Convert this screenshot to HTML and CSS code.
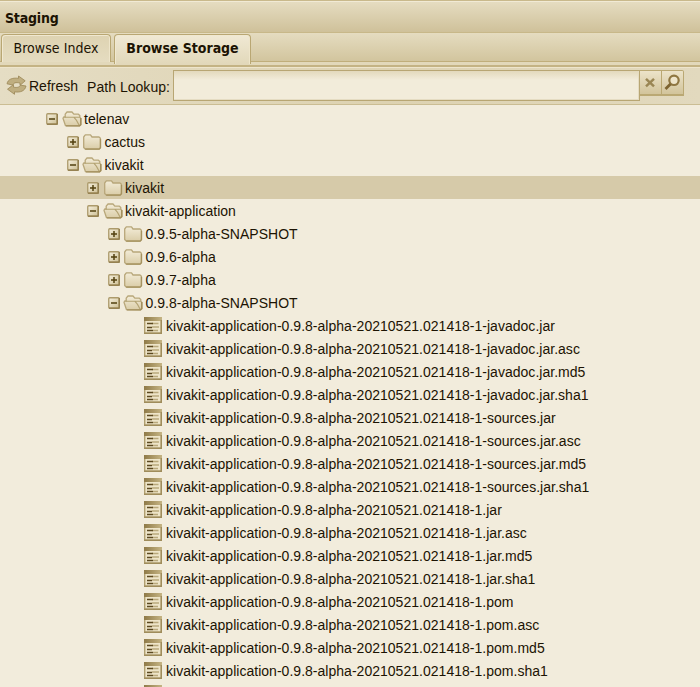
FILE: index.html
```
<!DOCTYPE html>
<html lang="en">
<head>
<meta charset="utf-8">
<title>Staging</title>
<link rel="stylesheet" href="styles.css">
</head>
<body>
<svg class="defs" width="0" height="0" aria-hidden="true">
  <defs>
    <linearGradient id="fold" x1="0" y1="0" x2="0" y2="1"><stop offset="0" stop-color="#f3ecd8"/><stop offset="1" stop-color="#dacda8"/></linearGradient>
    <linearGradient id="box" x1="0" y1="0" x2="1" y2="1"><stop offset="0" stop-color="#f6f0de"/><stop offset="1" stop-color="#cdbf94"/></linearGradient>
    <linearGradient id="head" x1="0" y1="0" x2="1" y2="0"><stop offset="0" stop-color="#8f7a48"/><stop offset="1" stop-color="#c5b483"/></linearGradient>
    <symbol id="plus" viewBox="0 0 12 12"><rect x=".75" y=".75" width="10.5" height="10.5" rx="1" fill="url(#box)" stroke="#ac9a6b" stroke-width="1.3"/><path d="M1 11.2H11.2V1" fill="none" stroke="#8f7b49" stroke-width="1.3"/><path d="M3 6H9M6 3V9" stroke="#52400f" stroke-width="1.5"/></symbol>
    <symbol id="minus" viewBox="0 0 12 12"><rect x=".75" y=".75" width="10.5" height="10.5" rx="1" fill="url(#box)" stroke="#ac9a6b" stroke-width="1.3"/><path d="M1 11.2H11.2V1" fill="none" stroke="#8f7b49" stroke-width="1.3"/><path d="M3 6H9" stroke="#52400f" stroke-width="1.5"/></symbol>
    <symbol id="closed" viewBox="0 0 20 18"><path d="M1.7 14.5V4L3.3 1.9H8.5L10 4H17L18.4 5.3V14.6L17 16H3.2Z" fill="url(#fold)" stroke="#b8a77a" stroke-width="1.3" stroke-linejoin="round"/><path d="M3.2 16.2H17.2L18.5 14.8V6" fill="none" stroke="#a5925f" stroke-width="1.3"/></symbol>
    <symbol id="open" viewBox="0 0 20 18"><path d="M3.5 15.7L1 8.3L1.7 7H3.2V4.2L5 2H10L11.8 4.2H16.4L17.8 5.4V7.2L18.8 8.5V14.5L17.5 15.8Z" fill="url(#fold)" stroke="#b8a77a" stroke-width="1.3" stroke-linejoin="round"/><path d="M2.5 7.3H12L14.5 10.4L17 15M12 7.3H17.8" fill="none" stroke="#b3a272" stroke-width="1.1"/><path d="M3.9 15.9H17.5L18.8 14.6V8" fill="none" stroke="#a18d5a" stroke-width="1.4"/></symbol>
    <symbol id="file" viewBox="0 0 18 17"><rect x=".7" y=".7" width="16.6" height="15.6" fill="#eee5c9" stroke="#b09f70" stroke-width="1.4"/><rect width="18" height="4" fill="url(#head)"/><path d="M0 16.3H17.3V3" fill="none" stroke="#9f8c5b" stroke-width="1.4"/><path d="M8 6.5H14.5M8 10H15M9 13.5H14" stroke="#b9a97c" stroke-width="1.3"/><path d="M3 6.5H9M3 10.5H8M3 13.5H9" stroke="#5c4920" stroke-width="1.4"/></symbol>
  </defs>
</svg>

<header class="title">Staging</header>
<nav class="tabs">
  <div class="tab tab-index"><span>Browse Index</span></div>
  <div class="tab tab-storage active"><span>Browse Storage</span></div>
</nav>
<div class="toolbar">
  <svg class="refresh" viewBox="0 0 21 20"><path d="M1 8.8C2 4.2 6 2.6 12.5 3.3V1L19.2 5.8L14 10.4V8C9.5 7.2 7.8 7.7 6.6 10Z" fill="#bfae80" stroke="#9b8756" stroke-width=".8"/><path d="M20 11C19 16 14.5 17.6 8.5 16.9V19.3L1.5 14.2L7.5 9.6V12.2C11.5 12.9 13.3 12.3 14.6 10.2Z" fill="#bfae80" stroke="#9b8756" stroke-width=".8"/></svg>
  <span class="refresh-label">Refresh</span>
  <label class="lookup-label">Path Lookup:</label>
  <div class="field"></div>
  <div class="trigger"><svg width="20" height="22" viewBox="0 0 20 22"><path d="M6 7.8L14 15.3M14 7.8L6 15.3" stroke="#9a8654" stroke-width="2.5"/></svg></div>
  <div class="trigger search"><svg width="20" height="22" viewBox="0 0 20 22"><circle cx="12" cy="9.3" r="4.7" fill="#eee5cb" stroke="#8f7742" stroke-width="2.2"/><path d="M8.5 13L3.5 18" stroke="#7d6430" stroke-width="2.8"/></svg></div>
</div>

<main class="tree">
  <div class="row d0"><svg class="toggle"><use href="#minus"/></svg><svg class="folder"><use href="#open"/></svg><span>telenav</span></div>
  <div class="row d1"><svg class="toggle"><use href="#plus"/></svg><svg class="folder"><use href="#closed"/></svg><span>cactus</span></div>
  <div class="row d1"><svg class="toggle"><use href="#minus"/></svg><svg class="folder"><use href="#open"/></svg><span>kivakit</span></div>
  <div class="row d2 selected"><svg class="toggle"><use href="#plus"/></svg><svg class="folder"><use href="#closed"/></svg><span>kivakit</span></div>
  <div class="row d2"><svg class="toggle"><use href="#minus"/></svg><svg class="folder"><use href="#open"/></svg><span>kivakit-application</span></div>
  <div class="row d3"><svg class="toggle"><use href="#plus"/></svg><svg class="folder"><use href="#closed"/></svg><span>0.9.5-alpha-SNAPSHOT</span></div>
  <div class="row d3"><svg class="toggle"><use href="#plus"/></svg><svg class="folder"><use href="#closed"/></svg><span>0.9.6-alpha</span></div>
  <div class="row d3"><svg class="toggle"><use href="#plus"/></svg><svg class="folder"><use href="#closed"/></svg><span>0.9.7-alpha</span></div>
  <div class="row d3"><svg class="toggle"><use href="#minus"/></svg><svg class="folder"><use href="#open"/></svg><span>0.9.8-alpha-SNAPSHOT</span></div>
  <div class="row leaf"><svg class="file"><use href="#file"/></svg><span>kivakit-application-0.9.8-alpha-20210521.021418-1-javadoc.jar</span></div>
  <div class="row leaf"><svg class="file"><use href="#file"/></svg><span>kivakit-application-0.9.8-alpha-20210521.021418-1-javadoc.jar.asc</span></div>
  <div class="row leaf"><svg class="file"><use href="#file"/></svg><span>kivakit-application-0.9.8-alpha-20210521.021418-1-javadoc.jar.md5</span></div>
  <div class="row leaf"><svg class="file"><use href="#file"/></svg><span>kivakit-application-0.9.8-alpha-20210521.021418-1-javadoc.jar.sha1</span></div>
  <div class="row leaf"><svg class="file"><use href="#file"/></svg><span>kivakit-application-0.9.8-alpha-20210521.021418-1-sources.jar</span></div>
  <div class="row leaf"><svg class="file"><use href="#file"/></svg><span>kivakit-application-0.9.8-alpha-20210521.021418-1-sources.jar.asc</span></div>
  <div class="row leaf"><svg class="file"><use href="#file"/></svg><span>kivakit-application-0.9.8-alpha-20210521.021418-1-sources.jar.md5</span></div>
  <div class="row leaf"><svg class="file"><use href="#file"/></svg><span>kivakit-application-0.9.8-alpha-20210521.021418-1-sources.jar.sha1</span></div>
  <div class="row leaf"><svg class="file"><use href="#file"/></svg><span>kivakit-application-0.9.8-alpha-20210521.021418-1.jar</span></div>
  <div class="row leaf"><svg class="file"><use href="#file"/></svg><span>kivakit-application-0.9.8-alpha-20210521.021418-1.jar.asc</span></div>
  <div class="row leaf"><svg class="file"><use href="#file"/></svg><span>kivakit-application-0.9.8-alpha-20210521.021418-1.jar.md5</span></div>
  <div class="row leaf"><svg class="file"><use href="#file"/></svg><span>kivakit-application-0.9.8-alpha-20210521.021418-1.jar.sha1</span></div>
  <div class="row leaf"><svg class="file"><use href="#file"/></svg><span>kivakit-application-0.9.8-alpha-20210521.021418-1.pom</span></div>
  <div class="row leaf"><svg class="file"><use href="#file"/></svg><span>kivakit-application-0.9.8-alpha-20210521.021418-1.pom.asc</span></div>
  <div class="row leaf"><svg class="file"><use href="#file"/></svg><span>kivakit-application-0.9.8-alpha-20210521.021418-1.pom.md5</span></div>
  <div class="row leaf"><svg class="file"><use href="#file"/></svg><span>kivakit-application-0.9.8-alpha-20210521.021418-1.pom.sha1</span></div>
  <div class="row leaf"><svg class="file"><use href="#file"/></svg></div>
</main>
</body>
</html>
```
FILE: styles.css
```
* { box-sizing: border-box; }
body {
  margin: 0;
  height: 687px;
  overflow: hidden;
  display: flex;
  flex-direction: column;
  background: #f2ecdc;
  color: #1c1303;
  font: 14px/23px "Liberation Sans", Arial, sans-serif;
}
svg { display: block; flex: none; }
.defs { position: absolute; }

.title {
  flex: none;
  height: 33px;
  padding: 4px 5px 0;
  border-top: 1px solid #c9b98c;
  border-bottom: 1px solid #c8b889;
  box-shadow: inset 0 1px #f1ead5;
  background: linear-gradient(#e6ddc2, #cfc19a);
  font: bold 14px/26px "DejaVu Sans Condensed", "DejaVu Sans", sans-serif;
  letter-spacing: -.2px;
}

.tabs {
  flex: none;
  height: 35px;
  padding: 1px 1px 0;
  display: flex;
  gap: 3px;
  border-bottom: 1px solid #eee5cc;
  background: linear-gradient(#e5dcc0 0, #d2c59e 28px, #c0ae7b 28px, #c0ae7b 29px, #e2d8ba 29px, #e2d8ba 32px, #c4b384 32px);
  font: 14px/27px "DejaVu Sans Condensed", "DejaVu Sans", sans-serif;
}
.tab {
  height: 28px;
  border: 1px solid #b9a773;
  border-bottom: 0;
  border-radius: 4px 4px 0 0;
  box-shadow: inset 1px 1px #f0e8d0, inset -1px 0 #eee5ca;
  background: linear-gradient(#ded3b2, #e5dcc0);
  text-align: center;
  white-space: nowrap;
}
.tab-index { width: 110px; letter-spacing: .05px; }
.tab-storage { width: 137px; font-weight: bold; letter-spacing: -.02px; }
.tab.active { height: 30px; background: linear-gradient(#f0e9d4, #e2d8ba); }

.toolbar {
  flex: none;
  height: 37px;
  padding: 2px 0 0 6px;
  display: flex;
  align-items: flex-start;
  border-bottom: 1px solid #cbbd93;
  background: linear-gradient(90deg, #e5ddc4, #ddd2b1 55%, #e2d9be);
}
.refresh { width: 21px; height: 20px; margin-top: 5px; }
.refresh-label { margin: 5px 0 0 2px; width: 50px; }
.lookup-label { margin: 6px 0 0 8px; width: 86px; white-space: nowrap; letter-spacing: .04px; }
.field {
  width: 467px;
  height: 31px;
  border: 1px solid #b8a673;
  box-shadow: inset -1px -1px #e5dcc2;
  background: linear-gradient(#e3d9bc, #f2ecda 9px);
}
.trigger {
  width: 22px;
  height: 26px;
  border: 1px solid #baa873;
  border-left: 0;
  border-bottom-width: 2px;
  background: linear-gradient(#ece3c9, #d2c49b);
}
.search { border-top-right-radius: 2px; }

.tree { padding-top: 2px; flex: none; }
.row { height: 23px; display: flex; align-items: center; white-space: nowrap; letter-spacing: .022px; }
.row span { padding-top: 1px; line-height: 22px; }
.selected { background: #d6caa9; }
.d0 { padding-left: 46px; }
.d1 { padding-left: 66.5px; }
.d2 { padding-left: 87px; }
.d3 { padding-left: 107.5px; }
.leaf { padding-left: 144px; }
.toggle { width: 12px; height: 12px; margin-right: 3.5px; }
.folder { width: 20px; height: 18px; margin-right: 2.5px; }
.file { width: 18px; height: 17px; margin-right: 4px; }
```
